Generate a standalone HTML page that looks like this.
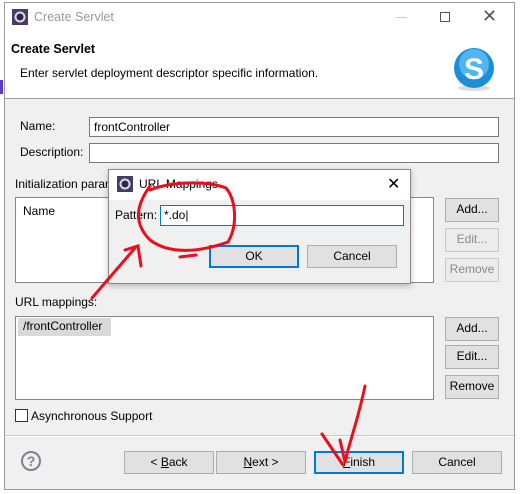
<!DOCTYPE html>
<html><head><style>
*{box-sizing:border-box}
body{margin:0;width:520px;height:494px;background:#fff;position:relative;overflow:hidden;font-family:"Liberation Sans","Noto Sans CJK KR",sans-serif;font-size:12px;color:#000}
.a{position:absolute}
.btn{position:absolute;background:#e1e1e1;border:1px solid #adadad;text-align:center;line-height:20px;font-size:12px}
.inp{position:absolute;background:#fff;border:1px solid #7a7a7a}
.dis{color:#8a8a8a;background:#ececec;border-color:#c8c8c8}
</style></head><body>
<div class="a" style="left:4px;top:2px;width:511px;height:488px;border:1px solid #9a9a9a;background:#f0f0f0"></div>
<div class="a" style="left:5px;top:3px;width:509px;height:96px;background:#fff;border-bottom:1px solid #a0a0a0"></div>
<div class="a" style="left:0;top:80px;width:3px;height:14px;background:#5a3ad0"></div>
<!-- title -->
<svg class="a" style="left:12px;top:9px" width="16" height="16"><rect x="0" y="0" width="16" height="16" fill="#4a3a6a"/><circle cx="8" cy="8" r="5.5" fill="#ddd"/><circle cx="8" cy="8" r="3.5" fill="#2a2a4a"/></svg>
<div class="a" style="left:34px;top:10px;color:#999;font-size:12.5px">Create Servlet</div>
<div class="a" style="left:396px;top:17px;width:11px;height:1px;background:#ccc"></div>
<div class="a" style="left:440px;top:12px;width:10px;height:10px;border:1px solid #555"></div>
<div class="a" style="left:482px;top:6px;font-size:18px;color:#555">✕</div>
<div class="a" style="left:11px;top:42px;font-weight:bold;font-size:12.5px">Create Servlet</div>
<div class="a" style="left:20px;top:66px">Enter servlet deployment descriptor specific information.</div>
<svg class="a" style="left:452px;top:46px" width="44" height="46"><ellipse cx="22" cy="42" rx="16" ry="3" fill="#ddd"/><circle cx="22" cy="22" r="20" fill="#1a8ed8"/><circle cx="22" cy="18" r="15" fill="#4fb6ee"/><text x="22" y="33" text-anchor="middle" font-size="30" font-weight="bold" fill="#fff" font-family="Liberation Sans">S</text></svg>
<!-- form -->
<div class="a" style="left:20px;top:119px">Name:</div>
<div class="inp" style="left:89px;top:117px;width:410px;height:20px;padding-left:4px;line-height:18px">frontController</div>
<div class="a" style="left:20px;top:145px">Description:</div>
<div class="inp" style="left:89px;top:143px;width:410px;height:20px"></div>
<div class="a" style="left:15px;top:177px">Initialization parameters:</div>
<div class="inp" style="left:15px;top:197px;width:419px;height:86px;border-color:#828790"><div class="a" style="left:7px;top:6px">Name</div></div>
<div class="btn" style="left:445px;top:198px;width:54px;height:24px">Add...</div>
<div class="btn dis" style="left:445px;top:228px;width:54px;height:24px">Edit...</div>
<div class="btn dis" style="left:445px;top:258px;width:54px;height:24px">Remove</div>
<div class="a" style="left:15px;top:295px">URL mappings:</div>
<div class="inp" style="left:15px;top:316px;width:419px;height:84px;border-color:#828790"><div class="a" style="left:2px;top:1px;width:93px;height:18px;background:#d9d9d9;padding-left:5px;line-height:17px">/frontController</div></div>
<div class="btn" style="left:445px;top:317px;width:54px;height:24px">Add...</div>
<div class="btn" style="left:445px;top:345px;width:54px;height:24px">Edit...</div>
<div class="btn" style="left:445px;top:375px;width:54px;height:24px">Remove</div>
<div class="a" style="left:15px;top:409px;width:13px;height:13px;border:1px solid #333;background:#fff"></div>
<div class="a" style="left:31px;top:409px">Asynchronous Support</div>
<div class="a" style="left:5px;top:435px;width:509px;height:1px;background:#c8c8c8"></div>
<div class="a" style="left:5px;top:436px;width:509px;height:1px;background:#fff"></div>
<div class="a" style="left:21px;top:451px;width:20px;height:20px;border:2px solid #7a8490;border-radius:50%;text-align:center;font-weight:bold;color:#7a8490;font-size:14px;line-height:16px">?</div>
<div class="btn" style="left:124px;top:451px;width:90px;height:23px">&lt; <u>B</u>ack</div>
<div class="btn" style="left:216px;top:451px;width:90px;height:23px"><u>N</u>ext &gt;</div>
<div class="btn" style="left:314px;top:451px;width:90px;height:23px;border:2px solid #0078d7;line-height:19px"><u>F</u>inish</div>
<div class="btn" style="left:412px;top:451px;width:90px;height:23px">Cancel</div>
<!-- dialog -->
<div class="a" style="left:108px;top:169px;width:303px;height:115px;border:1px solid #8a8a8a;background:#f0f0f0;box-shadow:0 2px 6px rgba(0,0,0,.25)"></div>
<div class="a" style="left:109px;top:170px;width:301px;height:30px;background:#fff"></div>
<svg class="a" style="left:117px;top:176px" width="16" height="16"><rect width="16" height="16" fill="#4a3a6a"/><circle cx="8" cy="8" r="5.5" fill="#ddd"/><circle cx="8" cy="8" r="3.5" fill="#2a2a4a"/></svg>
<div class="a" style="left:139px;top:177px">URL Mappings</div>
<div class="a" style="left:387px;top:174px;font-size:16px">✕</div>
<div class="a" style="left:115px;top:208px">Pattern:</div>
<div class="inp" style="left:160px;top:205px;width:244px;height:21px;border-color:#0078d7;padding-left:3px;line-height:19px">*.do|</div>
<div class="btn" style="left:209px;top:245px;width:90px;height:23px;border:2px solid #0078d7;line-height:19px">OK</div>
<div class="btn" style="left:307px;top:245px;width:90px;height:23px">Cancel</div>
<!-- annotations -->
<svg class="a" style="left:0;top:0" width="520" height="494" fill="none" stroke="#e8101c" stroke-width="3" stroke-linecap="round">
<path d="M150 186 C140 200 130 220 150 240 C170 255 200 252 228 242 C238 225 236 200 226 188 C205 180 170 182 150 190"/>
<path d="M180 257 L196 255"/>
<path d="M92 298 L135 248 M125 250 L138 246 L141 266"/>
<path d="M365 386 C358 420 350 440 345 462 M322 434 L343 465 M345 462 L340 440"/>
</svg>
</body></html>
